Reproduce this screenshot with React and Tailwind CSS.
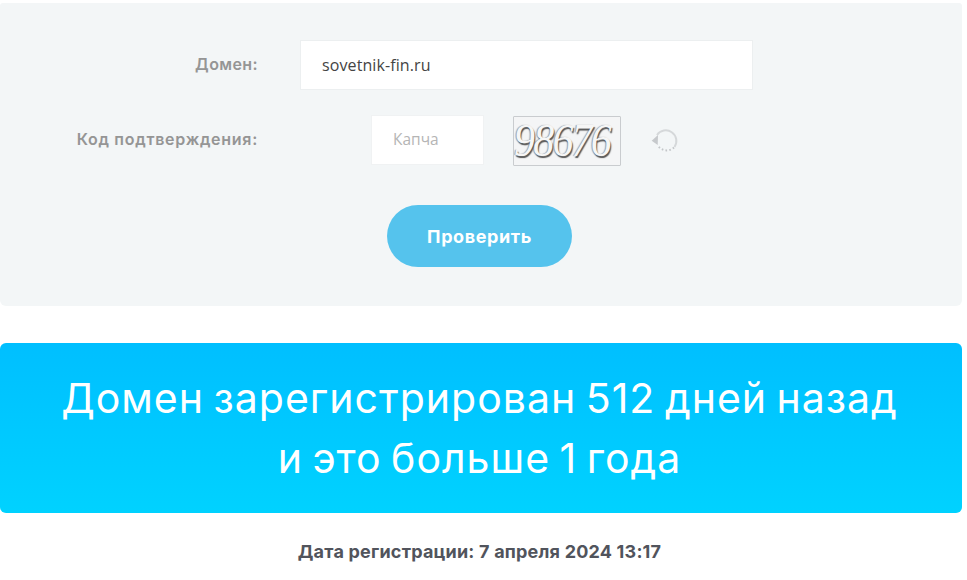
export default function App() {
  return (
    <div className="w-[962px] pt-[3px] bg-white font-['Inter','Liberation_Sans',sans-serif]">
      <section className="h-[303px] rounded-b-[6px] rounded-t-[3px] bg-[#f3f6f7] pt-[37px]">
        <div className="flex items-center h-[50px]">
          <div className="w-[258px] pb-[2px] text-right text-[16px] font-semibold text-[#959595] tracking-[0.4px]">Домен:</div>
          <div className="ml-[42px] w-[453px] h-[50px] bg-white border border-[#eceff0] flex items-center pl-[21px] text-[16px] tracking-[0.1px] text-[#444444] font-['Open_Sans',sans-serif]">sovetnik-fin.ru</div>
        </div>
        <div className="flex items-center h-[50px] mt-[25px]">
          <div className="w-[258px] pb-[2px] text-right text-[16px] font-semibold text-[#959595] tracking-[0.72px]">Код подтверждения:</div>
          <div className="ml-[113px] w-[113px] h-[50px] bg-white border border-[#f0f2f3] flex items-center pl-[21px] text-[15.5px] text-[#b5b5b5] font-['Open_Sans',sans-serif]">Капча</div>
          <div className="ml-[29px] mt-[1px] w-[108px] h-[50px] border border-[#c9cccf] rounded-[1px] bg-[#f4f5f6] flex items-center justify-center overflow-hidden">
            <span className="font-['Liberation_Serif',serif] italic antialiased text-[42px] leading-none tracking-[-1.8px] scale-y-110 text-[#f6f6f6] [text-shadow:1px_1px_1px_#555,-1px_0_1px_#999] -ml-[10px]">98676</span>
          </div>
          <svg className="ml-[30px] block" width="30" height="30" viewBox="0 0 30 30" fill="none">
            <path d="M6 10 A 10.6 10.6 0 1 1 23.5 22" stroke="#d5d8da" strokeWidth="2" />
            <path d="M23 22.5 A 10.6 10.6 0 0 1 7.5 21.5" stroke="#c3c6c9" strokeWidth="2" strokeDasharray="1.6 2.2" />
            <path d="M0.7 15.7 L7 10 L6.7 20 Z" fill="#c6c9cc" />
          </svg>
        </div>
        <div className="flex justify-center mt-[40px] pr-[3px]">
          <button className="w-[185px] h-[62px] rounded-[31px] bg-[#55c3ed] text-white text-[18px] tracking-[0.6px] font-bold">Проверить</button>
        </div>
      </section>
      <section className="mt-[37px] pr-[3px] h-[170px] rounded-[6px] bg-gradient-to-b from-[#00bfff] to-[#00d2ff] flex flex-col items-center justify-center text-white text-[41px] leading-[60px] font-normal tracking-[1px] [word-spacing:-3px]">
        <div>Домен зарегистрирован 512 дней назад</div>
        <div>и это больше 1 года</div>
      </section>
      <div className="mt-[26px] pr-[3px] text-center text-[18px] leading-[26px] font-bold tracking-[0.2px] text-[#51545c]">Дата регистрации: 7 апреля 2024 13:17</div>
    </div>
  );
}
